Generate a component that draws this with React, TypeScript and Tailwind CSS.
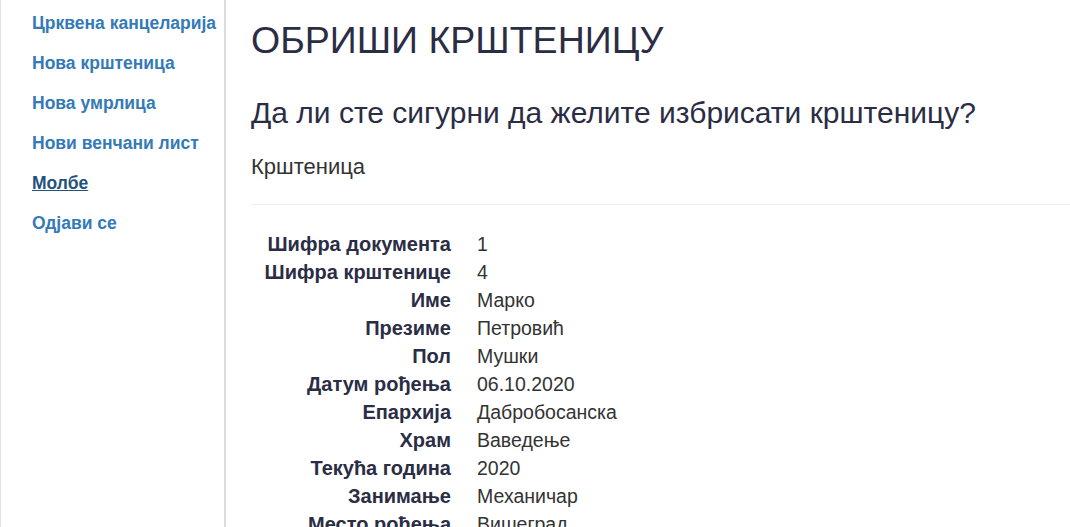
import React from 'react';

const navLinks = [
  { name: 'Црквена канцеларија', active: false },
  { name: 'Нова крштеница', active: false },
  { name: 'Нова умрлица', active: false },
  { name: 'Нови венчани лист', active: false },
  { name: 'Молбе', active: true },
  { name: 'Одјави се', active: false },
];

const details = [
  ['Шифра документа', '1'],
  ['Шифра крштенице', '4'],
  ['Име', 'Марко'],
  ['Презиме', 'Петровић'],
  ['Пол', 'Мушки'],
  ['Датум рођења', '06.10.2020'],
  ['Епархија', 'Дабробосанска'],
  ['Храм', 'Ваведење'],
  ['Текућа година', '2020'],
  ['Занимање', 'Механичар'],
  ['Место рођења', 'Вишеград'],
];

export default function App() {
  return (
    <div className="flex h-[527px] overflow-hidden bg-white font-['Liberation_Sans',Arial,sans-serif] text-[#333]">
      {/* Sidebar */}
      <aside className="w-[226px] shrink-0 border-l border-l-[#e0e0e0] border-r-2 border-r-[#dcdcdc] pt-[12px]">
        <ul className="flex flex-col">
          {navLinks.map((link) => (
            <li key={link.name} className="h-10 pl-[31px]">
              <a
                href="#"
                className={
                  link.active
                    ? 'text-[17.5px] font-bold leading-[22px] text-[#23527c] underline'
                    : 'text-[17.5px] font-bold leading-[22px] text-[#337ab7]'
                }
              >
                {link.name}
              </a>
            </li>
          ))}
        </ul>
      </aside>

      {/* Main content */}
      <main className="flex-1 pl-[25px] text-[#2b2d45]">
        <h1 className="mt-[20px] text-[37.5px] leading-[40px] font-normal">ОБРИШИ КРШТЕНИЦУ</h1>
        <h3 className="mt-[36px] text-[30px] leading-[34px] font-normal">
          Да ли сте сигурни да желите избрисати крштеницу?
        </h3>
        <div className="mt-[25px] text-[22px] leading-[24px] text-[#333]">Крштеница</div>
        <hr className="mt-[25px] border-t border-[#eee]" />
        <dl className="mt-[25px] grid grid-cols-[200px_1fr] gap-x-[26px] leading-[28px]">
          {details.map(([label, value]) => (
            <React.Fragment key={label}>
              <dt className="text-right text-[20px] font-bold text-[#2b2d45]">{label}</dt>
              <dd className="text-[19.5px] text-[#333]">{value}</dd>
            </React.Fragment>
          ))}
        </dl>
      </main>
    </div>
  );
}
